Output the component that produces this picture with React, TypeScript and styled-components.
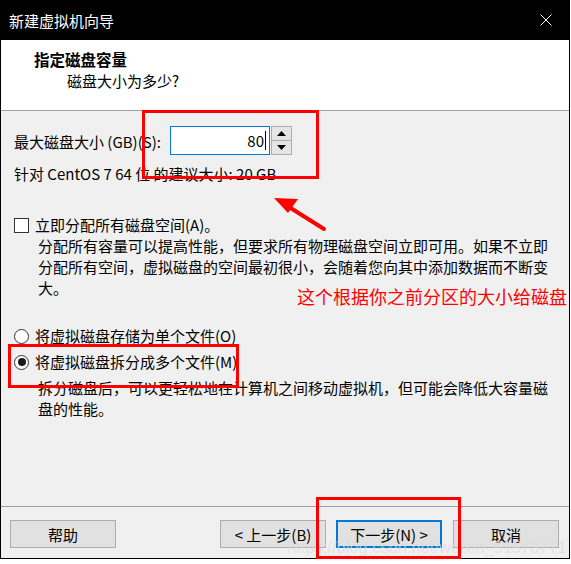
import React from 'react';
import styled, { createGlobalStyle } from 'styled-components';

const Global = createGlobalStyle`
  html, body { margin: 0; padding: 0; background: #ffffff; }
  body { font-family: "Microsoft YaHei", "Noto Sans CJK SC", sans-serif; }
  #root { width: 571px; height: 564px; }
`;

const Window = styled.div`
  position: relative;
  width: 570px;
  height: 559px;
  box-sizing: border-box;
  border: 1px solid #000;
  border-top: none;
  display: flex;
  flex-direction: column;
  background: #f0f0f0;
  font-size: 15px;
  color: #000;
`;

const TitleBar = styled.div`
  height: 40px;
  flex: none;
  background: #000;
  color: #fff;
  display: flex;
  align-items: center;
  justify-content: space-between;
  padding: 0 0 0 8px;
  font-size: 15px;
`;

const CloseBtn = styled.div`
  width: 46px;
  height: 40px;
  display: flex;
  align-items: center;
  justify-content: center;
`;

const Header = styled.div`
  height: 71px;
  flex: none;
  background: #fff;
  border-bottom: 1px solid #a0a0a0;
  padding: 9px 0 0 33px;
  box-sizing: border-box;
  line-height: 21px;
`;

const HeaderTitle = styled.div`
  font-weight: bold;
  font-size: 15.5px;
`;

const HeaderSub = styled.div`
  padding-left: 33px;
`;

const Body = styled.div`
  display: flex;
  flex-direction: column;
  padding: 0 13px;
  flex: 1;
  line-height: 20px;
`;

const SizeRow = styled.div`
  margin-top: 15px;
  display: flex;
  align-items: center;
  height: 29px;
`;

const SizeLabel = styled.span`
  width: 156px;
  padding-top: 2px;
`;

const NumberBox = styled.div`
  width: 100px;
  height: 29px;
  box-sizing: border-box;
  border: 1px solid #0078d7;
  background: #fff;
  display: flex;
  align-items: center;
  justify-content: flex-end;
  padding-right: 3px;
`;

const Caret = styled.span`
  width: 1px;
  height: 19px;
  background: #000;
  margin-left: 1px;
`;

const Spinner = styled.div`
  width: 21px;
  height: 29px;
  margin-left: 1px;
  display: flex;
  flex-direction: column;
  border: 1px solid #adadad;
  box-sizing: border-box;
  background: #adadad;
  gap: 1px;
`;

const SpinBtn = styled.div`
  flex: 1;
  background: #e5e5e5;
  display: flex;
  align-items: center;
  justify-content: center;
`;

const Hint = styled.div`
  margin-top: 9px;
`;

const OptionRow = styled.div<{ $top: number }>`
  margin-top: ${p => p.$top}px;
  display: flex;
  align-items: center;
  gap: 6px;
`;

const Box = styled.span<{ $round?: boolean }>`
  width: 13px;
  height: 13px;
  border: 1px solid #333;
  background: #fff;
  border-radius: ${p => (p.$round ? '50%' : '0')};
  display: flex;
  align-items: center;
  justify-content: center;
  flex: none;
`;

const Dot = styled.span`
  width: 8px;
  height: 8px;
  border-radius: 50%;
  background: #1a1a1a;
`;

const Desc = styled.div<{ $top: number }>`
  margin-top: ${p => p.$top}px;
  padding-left: 24px;
  line-height: 21px;
  padding-right: 8px;
`;

const Footer = styled.div`
  flex: none;
  height: 52px;
  box-sizing: border-box;
  border-top: 1px solid #a0a0a0;
  padding: 13px 10px 10px 9px;
  display: flex;
  align-items: flex-start;
`;

const Button = styled.div<{ $focus?: boolean; $gap?: number }>`
  width: 106px;
  height: 28px;
  box-sizing: border-box;
  border: ${p => (p.$focus ? '2px solid #0078d7' : '1px solid #adadad')};
  background: #e1e1e1;
  display: flex;
  align-items: center;
  justify-content: center;
  margin-left: ${p => p.$gap ?? 0}px;
`;

const Spacer = styled.div`
  flex: 1;
`;

const RedBox = styled.div`
  position: absolute;
  border: 3px solid #ff0000;
  box-sizing: border-box;
  pointer-events: none;
`;

const Note = styled.div`
  position: absolute;
  left: 296px;
  top: 285px;
  color: #ff0000;
  font-size: 18px;
  line-height: 22px;
  white-space: nowrap;
`;

const Arrow = styled.svg`
  position: absolute;
  left: 266px;
  top: 190px;
`;

const Watermark = styled.div`
  position: absolute;
  left: 286px;
  top: 538px;
  font-family: "Liberation Sans", Arial, sans-serif;
  font-size: 16px;
  line-height: 20px;
  color: rgba(220, 220, 220, 0.7);
  white-space: nowrap;
  letter-spacing: 0.2px;
  pointer-events: none;
`;

export default function App() {
  return (
    <>
      <Global />
      <Window>
        <TitleBar>
          <span>新建虚拟机向导</span>
          <CloseBtn>
            <svg width="12" height="12" viewBox="0 0 12 12">
              <path d="M0.5 0.5 L11.5 11.5 M11.5 0.5 L0.5 11.5" stroke="#fff" strokeWidth="1" />
            </svg>
          </CloseBtn>
        </TitleBar>
        <Header>
          <HeaderTitle>指定磁盘容量</HeaderTitle>
          <HeaderSub>磁盘大小为多少?</HeaderSub>
        </Header>
        <Body>
          <SizeRow>
            <SizeLabel>最大磁盘大小 (GB)(S):</SizeLabel>
            <NumberBox>
              <span>80</span>
              <Caret />
            </NumberBox>
            <Spinner>
              <SpinBtn>
                <svg width="9" height="5" viewBox="0 0 9 5"><path d="M0 5 L4.5 0 L9 5 Z" fill="#000" /></svg>
              </SpinBtn>
              <SpinBtn>
                <svg width="9" height="5" viewBox="0 0 9 5"><path d="M0 0 L4.5 5 L9 0 Z" fill="#000" /></svg>
              </SpinBtn>
            </Spinner>
          </SizeRow>
          <Hint>针对 CentOS 7 64 位 的建议大小: 20 GB</Hint>
          <OptionRow $top={31}>
            <Box />
            <span>立即分配所有磁盘空间(A)。</span>
          </OptionRow>
          <Desc $top={0}>
            分配所有容量可以提高性能，但要求所有物理磁盘空间立即可用。如果不立即分配所有空间，虚拟磁盘的空间最初很小，会随着您向其中添加数据而不断变大。
          </Desc>
          <OptionRow $top={28}>
            <Box $round />
            <span>将虚拟磁盘存储为单个文件(O)</span>
          </OptionRow>
          <OptionRow $top={6}>
            <Box $round>
              <Dot />
            </Box>
            <span>将虚拟磁盘拆分成多个文件(M)</span>
          </OptionRow>
          <Desc $top={5}>
            拆分磁盘后，可以更轻松地在计算机之间移动虚拟机，但可能会降低大容量磁盘的性能。
          </Desc>
        </Body>
        <Footer>
          <Button>帮助</Button>
          <Spacer />
          <Button>&lt; 上一步(B)</Button>
          <Button $focus $gap={10}>下一步(N) &gt;</Button>
          <Button $gap={11}>取消</Button>
        </Footer>

        <Watermark>https://blog.csdn.net/weixin_51573771</Watermark>
        <RedBox style={{ left: 141, top: 110, width: 177, height: 69 }} />
        <RedBox style={{ left: 7, top: 344, width: 231, height: 44 }} />
        <RedBox style={{ left: 315, top: 497, width: 145, height: 62 }} />
        <Note>这个根据你之前分区的大小给磁盘</Note>
        <Arrow width="64" height="44" viewBox="0 0 64 44">
          <path d="M57 39 L22 17" stroke="#ff0000" strokeWidth="4" strokeLinecap="round" />
          <path d="M7 8 L31 9 L21 23 Z" fill="#ff0000" />
        </Arrow>
      </Window>
    </>
  );
}
